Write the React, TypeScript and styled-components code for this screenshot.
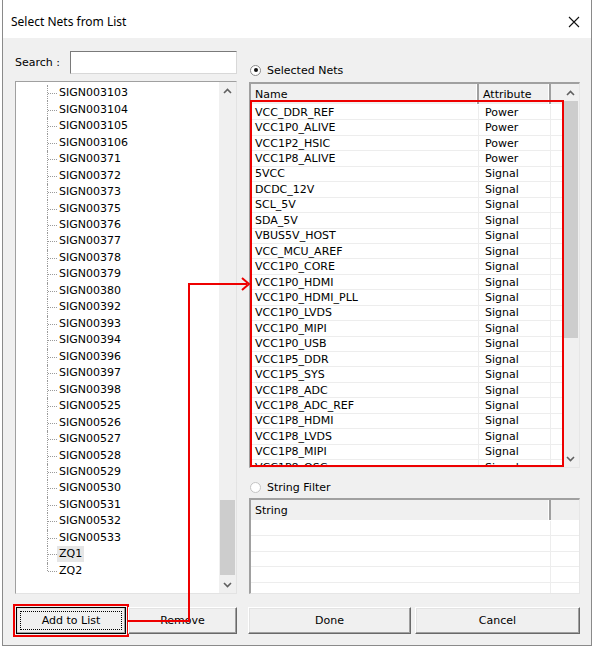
import { FC } from "react";
import styled, { createGlobalStyle, css } from "styled-components";

const GlobalStyle = createGlobalStyle`
  html, body {
    margin: 0;
    padding: 0;
    background: #ffffff;
  }
  * {
    box-sizing: border-box;
  }
`;

const treeItems = [
	"SIGN003103", "SIGN003104", "SIGN003105", "SIGN003106", "SIGN00371",
	"SIGN00372", "SIGN00373", "SIGN00375", "SIGN00376", "SIGN00377",
	"SIGN00378", "SIGN00379", "SIGN00380", "SIGN00392", "SIGN00393",
	"SIGN00394", "SIGN00396", "SIGN00397", "SIGN00398", "SIGN00525",
	"SIGN00526", "SIGN00527", "SIGN00528", "SIGN00529", "SIGN00530",
	"SIGN00531", "SIGN00532", "SIGN00533", "ZQ1", "ZQ2",
];

const nets: [string, string][] = [
	["VCC_DDR_REF", "Power"],
	["VCC1P0_ALIVE", "Power"],
	["VCC1P2_HSIC", "Power"],
	["VCC1P8_ALIVE", "Power"],
	["5VCC", "Signal"],
	["DCDC_12V", "Signal"],
	["SCL_5V", "Signal"],
	["SDA_5V", "Signal"],
	["VBUS5V_HOST", "Signal"],
	["VCC_MCU_AREF", "Signal"],
	["VCC1P0_CORE", "Signal"],
	["VCC1P0_HDMI", "Signal"],
	["VCC1P0_HDMI_PLL", "Signal"],
	["VCC1P0_LVDS", "Signal"],
	["VCC1P0_MIPI", "Signal"],
	["VCC1P0_USB", "Signal"],
	["VCC1P5_DDR", "Signal"],
	["VCC1P5_SYS", "Signal"],
	["VCC1P8_ADC", "Signal"],
	["VCC1P8_ADC_REF", "Signal"],
	["VCC1P8_HDMI", "Signal"],
	["VCC1P8_LVDS", "Signal"],
	["VCC1P8_MIPI", "Signal"],
	["VCC1P8_OSC", "Signal"],
];

const Chevron: FC<{ up?: boolean }> = ({ up }) => (
	<svg width="9" height="6" viewBox="0 0 9 6">
		<polyline
			points={up ? "1,5 4.5,1.5 8,5" : "1,1 4.5,4.5 8,1"}
			fill="none"
			stroke="#606060"
			strokeWidth="1.6"
		/>
	</svg>
);

type ScrollBarProps = {
	thumbTop: number;
	thumbHeight: number;
};

const ScrollBar: FC<ScrollBarProps> = ({ thumbTop, thumbHeight }) => (
	<ScrollTrack>
		<ScrollArrow><Chevron up /></ScrollArrow>
		<ScrollBody>
			<Thumb $top={thumbTop} $size={thumbHeight} />
		</ScrollBody>
		<ScrollArrow><Chevron /></ScrollArrow>
	</ScrollTrack>
);

const App: FC = () => {
	return (
		<>
			<GlobalStyle />
			<Window>
				<TitleBar>
					<span>Select Nets from List</span>
					<svg width="12" height="12" viewBox="0 0 12 12">
						<path d="M1 1 L11 11 M11 1 L1 11" stroke="#111" strokeWidth="1.1" />
					</svg>
				</TitleBar>
				<Body>
					<LeftColumn>
						<SearchRow>
							<Label>Search :</Label>
							<SearchInput />
						</SearchRow>
						<ListBox>
							<TreeArea>
								{treeItems.map((item, i) => (
									<TreeRow key={item} $last={i === treeItems.length - 1}>
										<TreeLabel $selected={item === "ZQ1"}>{item}</TreeLabel>
									</TreeRow>
								))}
							</TreeArea>
							<ScrollBar thumbTop={401} thumbHeight={75} />
						</ListBox>
						<ButtonRow $gap={2} $shift={1}>
							<Button $width={110} $default>
								<FocusRing>Add to List</FocusRing>
							</Button>
							<Button $width={109}>Remove</Button>
						</ButtonRow>
					</LeftColumn>
					<RightColumn>
						<RadioRow $top={12}>
							<Radio $checked />
							<Label>Selected Nets</Label>
						</RadioRow>
						<GridWrap $top={5}>
							<GridFrame $height={386}>
								<GridMain>
									<HeaderRow>
										<HeaderCell $width={228}>Name</HeaderCell>
										<HeaderCell $width={72}>Attribute</HeaderCell>
										<HeaderCell $width={12} />
									</HeaderRow>
									<RowsArea>
										{nets.map(([name, attr]) => (
											<DataRow key={name}>
												<DataCell $width={228}>{name}</DataCell>
												<DataCell $width={72} $pad={6}>{attr}</DataCell>
												<DataCell $width={12} />
											</DataRow>
										))}
									</RowsArea>
								</GridMain>
								<ScrollBar thumbTop={0} thumbHeight={237} />
							</GridFrame>
							<Highlight />
						</GridWrap>
						<RadioRow $top={12}>
							<Radio />
							<Label>String Filter</Label>
						</RadioRow>
						<GridWrap $top={4}>
							<GridFrame $height={96}>
								<GridMain>
									<HeaderRow>
										<HeaderCell $width={300}>String</HeaderCell>
										<HeaderCell $width={29} />
									</HeaderRow>
									<RowsArea>
										{[0, 1, 2, 3, 4].map((n) => (
											<DataRow key={n}>
												<DataCell $width={300} />
												<DataCell $width={29} />
											</DataRow>
										))}
									</RowsArea>
								</GridMain>
							</GridFrame>
						</GridWrap>
						<ButtonRow $gap={4} $shift={-1}>
							<Button $width={163}>Done</Button>
							<Button $width={165}>Cancel</Button>
						</ButtonRow>
					</RightColumn>
				</Body>
				<Connector width="590" height="646" viewBox="0 0 590 646">
					<polyline
						points="125,621 186,621 186,284 244,284"
						fill="none"
						stroke="#ee0000"
						strokeWidth="2"
					/>
					<polyline
						points="239,278 246,284 239,290"
						fill="none"
						stroke="#ee0000"
						strokeWidth="2"
					/>
				</Connector>
			</Window>
		</>
	);
};

const Window = styled.div`
    position: relative;
    width: 590px;
    height: 646px;
    margin-left: 2px;
    border: 1px solid #8a8a8a;
    border-top: none;
    background: #f0f0f0;
    display: flex;
    flex-direction: column;
    font-family: 'DejaVu Sans', Verdana, sans-serif;
    font-size: 11px;
    color: #000;
`;

const TitleBar = styled.div`
    height: 38px;
    flex: none;
    background: #ffffff;
    display: flex;
    align-items: center;
    justify-content: space-between;
    padding: 5px 11px 0 8px;
    font-family: 'Noto Sans', 'Open Sans', sans-serif;
    font-size: 12px;
`;

const Body = styled.div`
    display: flex;
    gap: 12px;
    padding: 13px 0 0 12px;
`;

const Column = styled.div`
    display: flex;
    flex-direction: column;
`;

const LeftColumn = styled(Column)`
    width: 222px;
`;

const RightColumn = styled(Column)`
    width: 331px;
`;

const SearchRow = styled.div`
    display: flex;
    align-items: center;
    height: 23px;
`;

const Label = styled.span`
    white-space: nowrap;
`;

const SearchInput = styled.div`
    margin-left: auto;
    width: 167px;
    height: 23px;
    background: #fff;
    border: 1px solid #7a7a7a;
    border-color: #7a7a7a #d8d8d8 #d8d8d8 #7a7a7a;
`;

const ListBox = styled.div`
    margin-top: 7px;
    height: 513px;
    display: flex;
    background: #fff;
    border: 1px solid #a0a0a0;
    border-right-color: #e3e3e3;
    border-bottom-color: #e3e3e3;
    overflow: hidden;
`;

const TreeArea = styled.div`
    flex: 1;
    padding-top: 3px;
    overflow: hidden;
`;

const TreeRow = styled.div<{ $last?: boolean }>`
    position: relative;
    height: 16.48px;
    display: flex;
    align-items: center;
    padding-left: 41px;

    &::before {
        content: '';
        position: absolute;
        left: 31px;
        top: 0;
        height: ${(p) => (p.$last ? "50%" : "100%")};
        border-left: 1px dotted #9a9a9a;
    }

    &::after {
        content: '';
        position: absolute;
        left: 32px;
        top: 50%;
        width: 9px;
        border-top: 1px dotted #9a9a9a;
    }
`;

const TreeLabel = styled.span<{ $selected?: boolean }>`
    padding: 1px 2px;
    line-height: 14px;
    ${(p) =>
		p.$selected &&
		css`
            background: #e6e6e6;
        `}
`;

const ScrollTrack = styled.div`
    width: 17px;
    flex: none;
    display: flex;
    flex-direction: column;
    background: #f0f0f0;
`;

const ScrollArrow = styled.div`
    height: 17px;
    flex: none;
    display: flex;
    align-items: center;
    justify-content: center;
`;

const ScrollBody = styled.div`
    flex: 1;
`;

const Thumb = styled.div<{ $top: number; $size: number }>`
    margin-top: ${(p) => p.$top}px;
    margin-left: 1px;
    width: 15px;
    height: ${(p) => p.$size}px;
    background: #cdcdcd;
`;

const RadioRow = styled.div<{ $top: number }>`
    margin-top: ${(p) => p.$top}px;
    height: 14px;
    display: flex;
    align-items: center;
    gap: 6px;
    padding-left: 1px;
`;

const Radio = styled.span<{ $checked?: boolean }>`
    width: 11px;
    height: 11px;
    border-radius: 50%;
    border: 1px solid ${(p) => (p.$checked ? "#8a8a8a" : "#c4c4c4")};
    background: #fff;
    display: flex;
    align-items: center;
    justify-content: center;

    &::after {
        content: '';
        width: 4px;
        height: 4px;
        border-radius: 50%;
        background: ${(p) => (p.$checked ? "#111" : "transparent")};
    }
`;

const GridWrap = styled.div<{ $top: number }>`
    position: relative;
    margin-top: ${(p) => p.$top}px;
`;

const GridFrame = styled.div<{ $height: number }>`
    height: ${(p) => p.$height}px;
    display: flex;
    background: #fff;
    border-top: 2px solid #a0a0a0;
    border-left: 2px solid #a0a0a0;
    border-right: 1px solid #e6e6e6;
    border-bottom: 1px solid #e6e6e6;
    overflow: hidden;
`;

const GridMain = styled.div`
    flex: 1;
    display: flex;
    flex-direction: column;
    overflow: hidden;
`;

const HeaderRow = styled.div`
    height: 21px;
    flex: none;
    display: flex;
    background: #f0f0f0;
    border-bottom: 1px solid #ffffff;
`;

const HeaderCell = styled.div<{ $width: number }>`
    width: ${(p) => p.$width}px;
    flex: none;
    display: flex;
    align-items: center;
    padding-left: 4px;
    border-right: 2px solid #a0a0a0;
    box-shadow: inset -1px 0 0 #ffffff;

    &:last-child {
        border-right: none;
        box-shadow: none;
        flex: 1;
    }
`;

const RowsArea = styled.div`
    flex: 1;
    overflow: hidden;
`;

const DataRow = styled.div`
    height: 15.45px;
    display: flex;
    border-bottom: 1px solid #ededed;
`;

const DataCell = styled.div<{ $width: number; $pad?: number }>`
    width: ${(p) => p.$width}px;
    flex: none;
    display: flex;
    align-items: center;
    padding-left: ${(p) => p.$pad ?? 4}px;
    border-right: 1px solid #ededed;
    white-space: nowrap;
    overflow: hidden;

    &:last-child {
        border-right: none;
        flex: 1;
    }
`;

/* red annotation drawn over the net list */
const Highlight = styled.div`
    position: absolute;
    left: 1px;
    top: 18px;
    width: 314px;
    height: 367px;
    border: 2px solid #ee0000;
    pointer-events: none;
`;

const ButtonRow = styled.div<{ $gap: number; $shift: number }>`
    margin-top: 13px;
    margin-left: ${(p) => p.$shift}px;
    height: 27px;
    display: flex;
    gap: ${(p) => p.$gap}px;
`;

const Button = styled.button<{ $width: number; $default?: boolean }>`
    width: ${(p) => p.$width}px;
    height: 27px;
    padding: 0;
    display: flex;
    align-items: center;
    justify-content: center;
    font-family: 'DejaVu Sans', Verdana, sans-serif;
    font-size: 11px;
    color: #000;
    background: #f0f0f0;
    border: 1px solid;
    border-color: #ffffff #696969 #696969 #ffffff;
    box-shadow: inset -1px -1px 0 #a0a0a0, inset 1px 1px 0 #e3e3e3;

    ${(p) =>
		p.$default &&
		css`
            border-color: #000;
            outline: 2px solid #ee0000;
            outline-offset: 1px;
        `}
`;

const FocusRing = styled.span`
    display: flex;
    align-items: center;
    justify-content: center;
    width: calc(100% - 6px);
    height: calc(100% - 6px);
    border: 1px dotted #000;
`;

const Connector = styled.svg`
    position: absolute;
    left: 0;
    top: 0;
    pointer-events: none;
`;

export default App;
